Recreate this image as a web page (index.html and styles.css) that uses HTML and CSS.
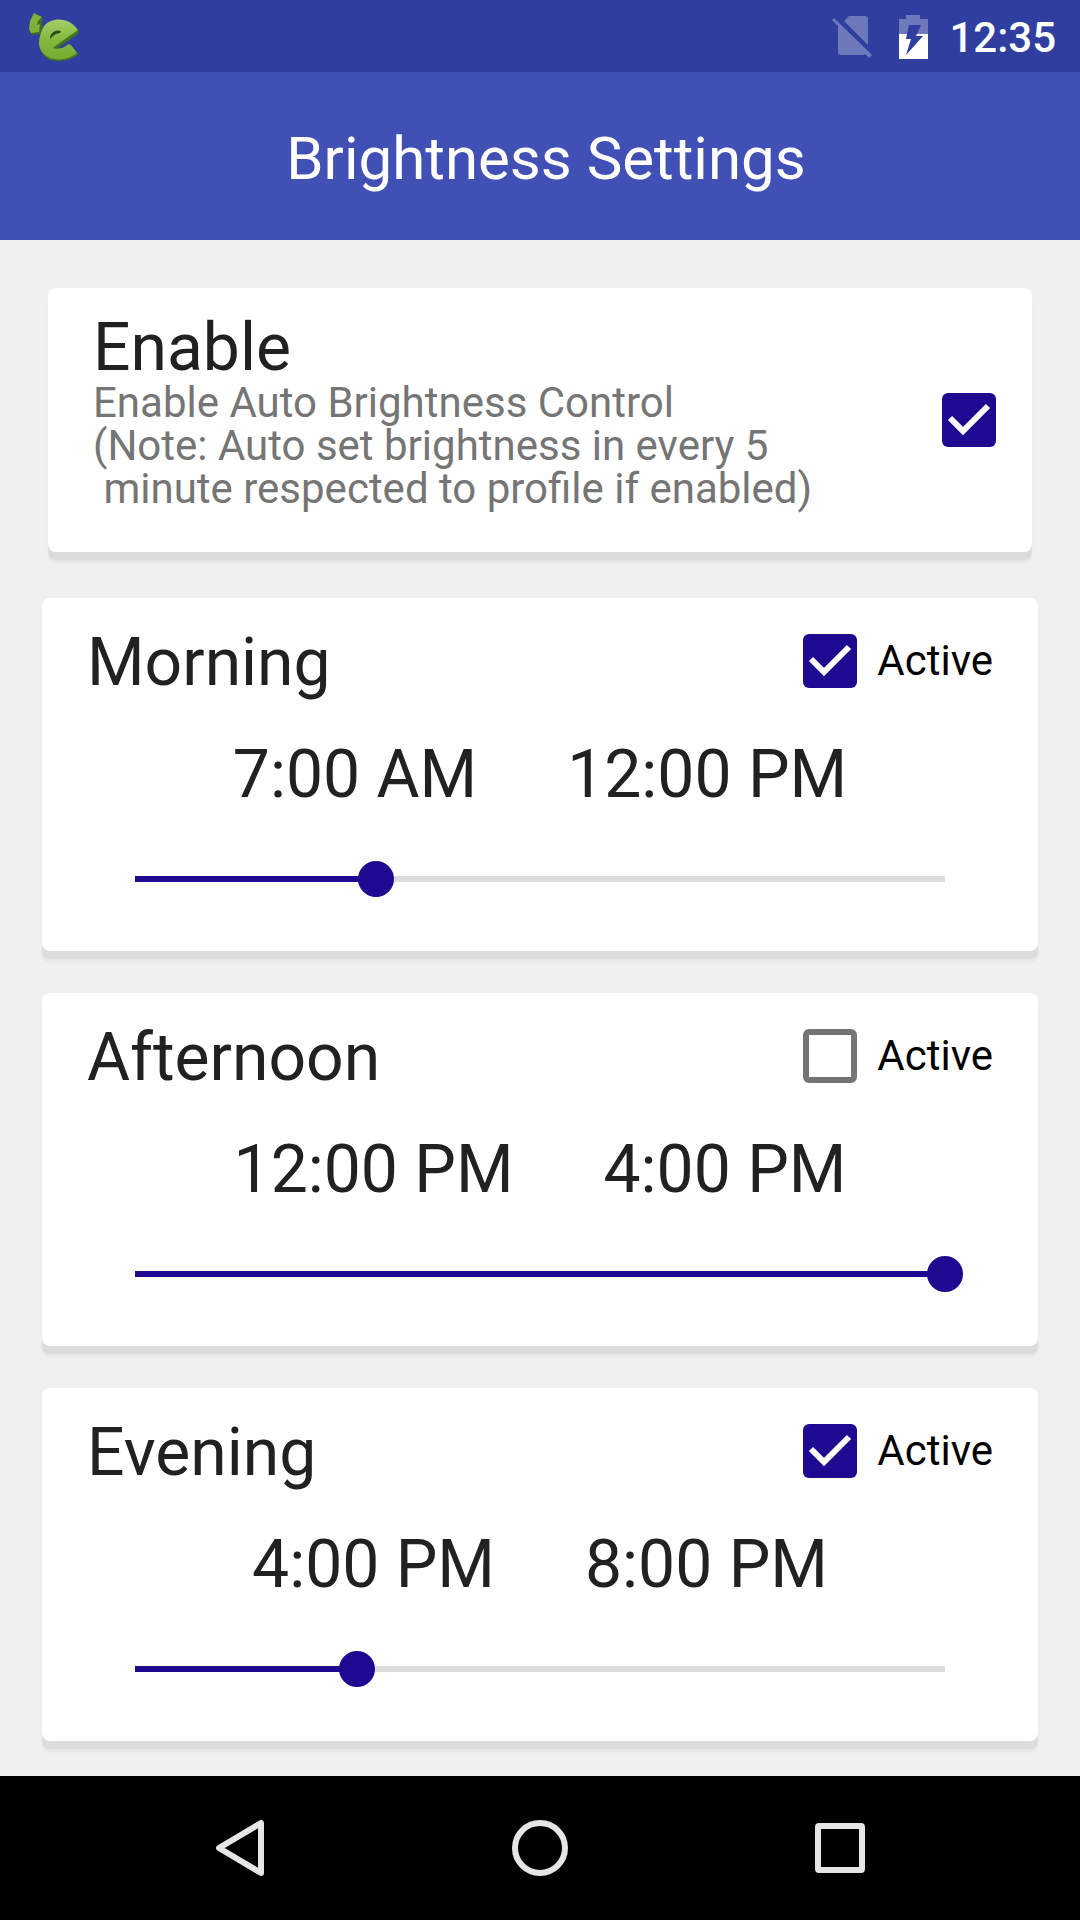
FILE: index.html
```html
<!DOCTYPE html>
<html lang="en">
  <head>
    <meta charset="UTF-8" />
    <meta name="viewport" content="width=device-width, initial-scale=1.0" />
    <title>Brightness Settings</title>
    <link rel="stylesheet" href="styles.css">
  </head>
  <body>
    <!-- Status bar -->
    <div class="status-bar">
      <svg class="app-icon" width="52" height="50" viewBox="0 0 52 50" aria-hidden="true">
        <defs>
          <linearGradient id="leaf" x1="0" y1="0" x2="0" y2="1">
            <stop offset="0" stop-color="#a4cf6a" />
            <stop offset="0.5" stop-color="#85b93c" />
            <stop offset="1" stop-color="#76ab31" />
          </linearGradient>
        </defs>
        <path d="M7 2 L15 7 L14 13 L15 14 L12 22 L4 23 L1 18 L2 9 Z" fill="#3f701f" />
        <path d="M6 1 L14 5 L10 9 L9 13 L12 12 L11 20 L3 21 L1 17 L2 9 Z" fill="#7db13b" />
        <path d="M24 10 C33 7 44 10 51 19 L50 22 L27 38 C32 39 38 37 41 34 L51 42 C43 49 32 50 22 48 C14 44 9 35 12 25 C14 17 18 12 24 10 Z" fill="#427420" />
        <path d="M23 9 C33 5 44 9 50 18 L26 35 L25 36 C31 38 38 35 40 32 L43 33 L49 41 C42 47 31 49 22 46 C13 42 9 34 12 24 C14 16 17 11 23 9 Z" fill="url(#leaf)" />
        <path d="M22 27 C22 21 27 17 33 19 L32 21 C28 21 25 24 22 27 Z" fill="#2b4a1b" />
      </svg>
      <div class="status-right">
        <svg class="sim-icon" width="40" height="42" viewBox="0 0 40 42" aria-hidden="true">
          <path d="M12 5 L17 0 H33 Q36 0 36 3 V29 Z" />
          <path d="M2 2 L40 39 L37 42 L33 38 Q32 39 31 39 H9 Q6 39 6 36 V10 L0 4 Z" />
        </svg>
        <svg class="battery-icon" width="29" height="44" viewBox="0 0 29 44" aria-hidden="true">
          <path class="battery-empty" d="M7 0 H21 V4 H29 V19 H18 L22 10 H10 L8 19 H0 V4 H7 Z" />
          <path class="battery-full" d="M0 19 H8 L7 24 H12 L7 40 L24 21 H17 L18 19 H29 V44 H0 Z" />
        </svg>
        <time class="clock">12:35</time>
      </div>
    </div>

    <header class="app-bar">
      <h1>Brightness Settings</h1>
    </header>

    <main class="settings">
      <!-- Auto brightness switch -->
      <section class="card enable-card">
        <label class="enable-text" for="enable">
          <span class="enable-title">Enable</span>
          <span class="enable-note">Enable Auto Brightness Control
(Note: Auto set brightness in every 5
 minute respected to profile if enabled)</span>
        </label>
        <input type="checkbox" id="enable" checked />
      </section>

      <!-- Profiles -->
      <section class="card profile">
        <div class="profile-head">
          <h2>Morning</h2>
          <label class="active"><input type="checkbox" checked />Active</label>
        </div>
        <div class="times">
          <button type="button">7:00 AM</button>
          <button type="button">12:00 PM</button>
        </div>
        <input type="range" min="0" max="255" value="76" style="--fill: 29.8%" aria-label="Morning brightness" />
      </section>

      <section class="card profile">
        <div class="profile-head">
          <h2>Afternoon</h2>
          <label class="active"><input type="checkbox" />Active</label>
        </div>
        <div class="times">
          <button type="button">12:00 PM</button>
          <button type="button">4:00 PM</button>
        </div>
        <input type="range" min="0" max="255" value="255" style="--fill: 100%" aria-label="Afternoon brightness" />
      </section>

      <section class="card profile">
        <div class="profile-head">
          <h2>Evening</h2>
          <label class="active"><input type="checkbox" checked />Active</label>
        </div>
        <div class="times">
          <button type="button">4:00 PM</button>
          <button type="button">8:00 PM</button>
        </div>
        <input type="range" min="0" max="255" value="70" style="--fill: 27.5%" aria-label="Evening brightness" />
      </section>
    </main>

    <!-- Navigation bar -->
    <nav class="nav-bar">
      <button type="button" aria-label="Back">
        <svg width="60" height="60" viewBox="0 0 60 60"><path d="M51 5 V55 L9 30 Z" /></svg>
      </button>
      <button type="button" aria-label="Home">
        <svg width="60" height="60" viewBox="0 0 60 60"><circle cx="30" cy="30" r="25" /></svg>
      </button>
      <button type="button" aria-label="Recent apps">
        <svg width="60" height="60" viewBox="0 0 60 60"><rect x="8" y="8" width="44" height="44" rx="1" /></svg>
      </button>
    </nav>

    <script>
      // Keep the coloured part of each slider in step with its value
      document.querySelectorAll('input[type="range"]').forEach((slider) => {
        slider.addEventListener("input", () => {
          slider.style.setProperty("--fill", (slider.value / slider.max) * 100 + "%");
        });
      });
    </script>
  </body>
</html>
```

FILE: styles.css
```css
* {
  box-sizing: border-box;
}
body {
  margin: 0;
  min-height: 100vh;
  display: flex;
  flex-direction: column;
  font-family: Roboto, sans-serif;
  font-size: 42px;
  color: #212121;
  background-color: #f0f0f0;
}
h1,
h2 {
  margin: 0;
  font-weight: 400;
}
button {
  padding: 0;
  border: none;
  background: none;
  font: inherit;
  color: inherit;
  cursor: pointer;
}
svg {
  display: block;
}

/* Status bar */
.status-bar {
  display: flex;
  justify-content: space-between;
  align-items: center;
  height: 72px;
  padding: 2px 24px 0 28px;
  background-color: #303f9f;
  color: #fff;
}
.status-right {
  display: flex;
  align-items: center;
  gap: 21px;
}
.sim-icon {
  margin-right: 6px;
}
.sim-icon,
.battery-empty {
  fill: #fff;
  fill-opacity: 0.3;
}
.battery-full {
  fill: #fff;
}
.clock {
  font-weight: 500;
}

.app-bar {
  display: flex;
  justify-content: center;
  align-items: center;
  height: 168px;
  padding: 4px 0 0 12px;
  background-color: #4150b5;
  color: #fff;
}
h1 {
  font-size: 60px;
}

/* Cards */
.settings {
  flex: 1;
  display: flex;
  flex-direction: column;
  gap: 42px;
  padding: 48px 42px 35px;
}
.card {
  border-radius: 8px;
  background-color: #fff;
  box-shadow: 0 8px 0 #dcdcdc, 0 11px 2px #e6e6e6;
}
.enable-card {
  display: flex;
  justify-content: space-between;
  align-items: center;
  margin: 0 6px 4px;
  padding: 26px 36px 26px 45px;
}
.enable-text {
  display: flex;
  flex-direction: column;
  padding-bottom: 16px;
}
.enable-title {
  font-size: 66px;
  line-height: 67px;
}
.enable-note {
  line-height: 43px;
  color: #757575;
  white-space: pre-wrap;
}
.profile {
  display: flex;
  flex-direction: column;
  padding: 26px 45px 54px;
}
.profile-head {
  display: flex;
  justify-content: space-between;
  align-items: center;
}
h2,
.times {
  font-size: 66px;
  line-height: 77px;
}
.active {
  display: flex;
  align-items: center;
  gap: 20px;
  padding-bottom: 4px;
  color: #000;
}
.times {
  display: flex;
  justify-content: center;
  gap: 90px;
  margin: 35px 0 48px;
}

input[type="checkbox"] {
  appearance: none;
  flex: none;
  width: 54px;
  height: 54px;
  margin: 0;
  border: 6px solid #757575;
  border-radius: 6px;
}
input[type="checkbox"]:checked {
  border: none;
  background: #1d0a91 url("data:image/svg+xml,%3Csvg xmlns='http://www.w3.org/2000/svg' viewBox='0 0 54 54'%3E%3Cpath d='M8 25 L21 38 L46 13' fill='none' stroke='%23fff' stroke-width='6'/%3E%3C/svg%3E") center / 100%;
}

/* The track is inset by half a thumb at both ends */
input[type="range"] {
  appearance: none;
  height: 36px;
  margin: 0 30px;
  background: linear-gradient(to right, #1d0a91 var(--fill), #dcdcdc var(--fill)) center / calc(100% - 36px) 6px no-repeat;
}
input[type="range"]::-webkit-slider-thumb {
  appearance: none;
  width: 36px;
  height: 36px;
  border-radius: 50%;
  background-color: #1d0a91;
}

/* Navigation bar */
.nav-bar {
  display: flex;
  justify-content: center;
  align-items: center;
  gap: 240px;
  height: 144px;
  background-color: #000;
}
.nav-bar svg {
  fill: none;
  stroke: #e6e6e6;
  stroke-width: 6;
  stroke-linejoin: round;
}
```
